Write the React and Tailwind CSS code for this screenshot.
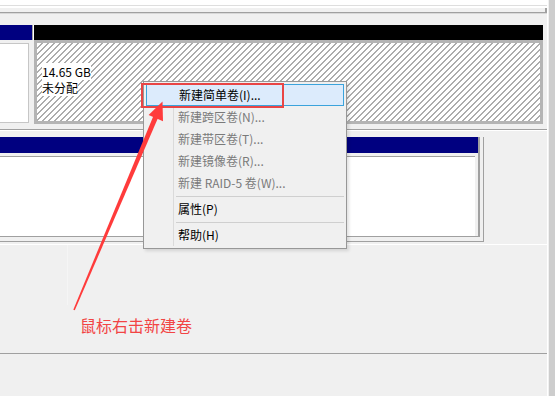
import React from 'react';

const menuItems = [
    { label: '新建简单卷(I)...', active: true },
    { label: '新建跨区卷(N)...', disabled: true },
    { label: '新建带区卷(T)...', disabled: true },
    { label: '新建镜像卷(R)...', disabled: true },
    { label: '新建 RAID-5 卷(W)...', disabled: true },
    { sep: true },
    { label: '属性(P)' },
    { sep: true },
    { label: '帮助(H)' },
];

const ContextMenu = () => (
    <div className="absolute left-[143px] top-[81px] w-[204px] border border-[#979797] bg-[#f0f0f0] p-[2px] shadow-[2px_2px_3px_rgba(0,0,0,0.12)]">
        <div className="absolute left-[29px] top-[24px] bottom-[2px] w-px bg-[#dadada]" />
        {menuItems.map((item, i) =>
            item.sep ? (
                <div key={i} className="h-[4px] flex items-center pl-[30px]">
                    <div className="h-px w-full bg-[#cfcfcf]" />
                </div>
            ) : (
                <div
                    key={i}
                    className={`relative h-[22px] flex items-center pl-[32px] text-[12px] leading-none ${
                        item.active ? 'bg-[#dcebfc] border border-[#3aa3dc] pl-[31px]' : ''
                    } ${item.disabled ? 'text-[#7a7a7a]' : 'text-black'}`}
                >
                    {item.label}
                </div>
            )
        )}
    </div>
);

const Arrow = () => (
    <svg className="absolute left-0 top-0 pointer-events-none" width="555" height="396" viewBox="0 0 555 396">
        <polygon points="73.3,309.7 74.8,310.3 158.2,117.4 153.6,115.4" fill="#ff3b3b" />
        <polygon points="162.5,101.5 148.6,115 163,121.2" fill="#ff3b3b" />
    </svg>
);

export default function App() {
    return (
        <div className="relative w-[555px] h-[396px] overflow-hidden bg-[#f0f0f0] font-['Noto_Sans_CJK_SC',sans-serif] text-black">
            <div className="flex h-full">
                <div className="w-[547px] flex flex-col">
                    {/* top strip */}
                    <div className="h-[5px] bg-white" />
                    <div className="h-px bg-[#dedede]" />
                    <div className="h-[2px] bg-white" />
                    <div className="h-[5px] w-[547px] border-r-2 border-b border-[#a0a0a0]" />
                    <div className="h-px bg-[#d8d8d8]" />
                    <div className="h-[11px]" />

                    {/* disk row 1 */}
                    <div className="flex h-[99px]">
                        <div className="w-[32px] flex flex-col">
                            <div className="h-[15px] bg-[#000080]" />
                            <div className="pt-[3px] flex-1 flex flex-col">
                                <div className="h-[80px] w-[29px] bg-white border-t border-r border-b border-[#c6c6c6]" />
                            </div>
                        </div>
                        <div className="w-[2px] h-[15px] border-l border-[#a0a0a0] bg-white" />
                        <div className="w-[509px] flex flex-col">
                            <div className="h-[15px] bg-black" />
                            <div className="h-[84px] border-[3px] border-[#b4b4b4] bg-[repeating-linear-gradient(135deg,#ffffff_0px,#ffffff_3.3px,#acacac_3.3px,#acacac_4.243px)] pl-[5px] pt-[21px] text-[12px] leading-[16px]">
                                <div><span className="bg-white">14.65 GB</span></div>
                                <div><span className="bg-white">未分配</span></div>
                            </div>
                        </div>
                    </div>

                    <div className="h-[5px]" />
                    <div className="h-px bg-[#a0a0a0]" />
                    <div className="h-px bg-white" />
                    <div className="h-[6px]" />

                    {/* disk row 2 */}
                    <div className="w-[484px] h-[105px] border-r border-b border-[#a0a0a0] pr-[3px] pb-[4px]">
                        <div className="w-[480px] h-[100px] border-r-2 border-b border-[#a0a0a0] flex flex-col">
                            <div className="h-[16px] w-[478px] bg-[#000080]" />
                            <div className="h-[3px]" />
                            <div className="w-[475px] h-[80px] bg-white border-t border-[#a0a0a0]" />
                        </div>
                    </div>

                    <div className="h-[2px]" />
                    <div className="h-px bg-white" />

                    {/* lower blank area */}
                    <div className="flex h-[108px]">
                        <div className="w-[67px]" />
                        <div className="h-[60px] border-l border-[#f5f5f5]" />
                    </div>
                    <div className="h-px bg-[#a0a0a0]" />
                    <div className="flex-1" />
                </div>
                <div className="w-px bg-white" />
                <div className="w-px" />
                <div className="w-[6px] bg-[#cdcdcd]" />
            </div>

            <ContextMenu />
            <div className="absolute left-[141px] top-[83px] w-[143px] h-[25px] border-2 border-[#e94545]" />
            <Arrow />
            <div className="absolute left-[80px] top-[315px] text-[16px] leading-[20px] text-[#f24444]">鼠标右击新建卷</div>
        </div>
    );
}
